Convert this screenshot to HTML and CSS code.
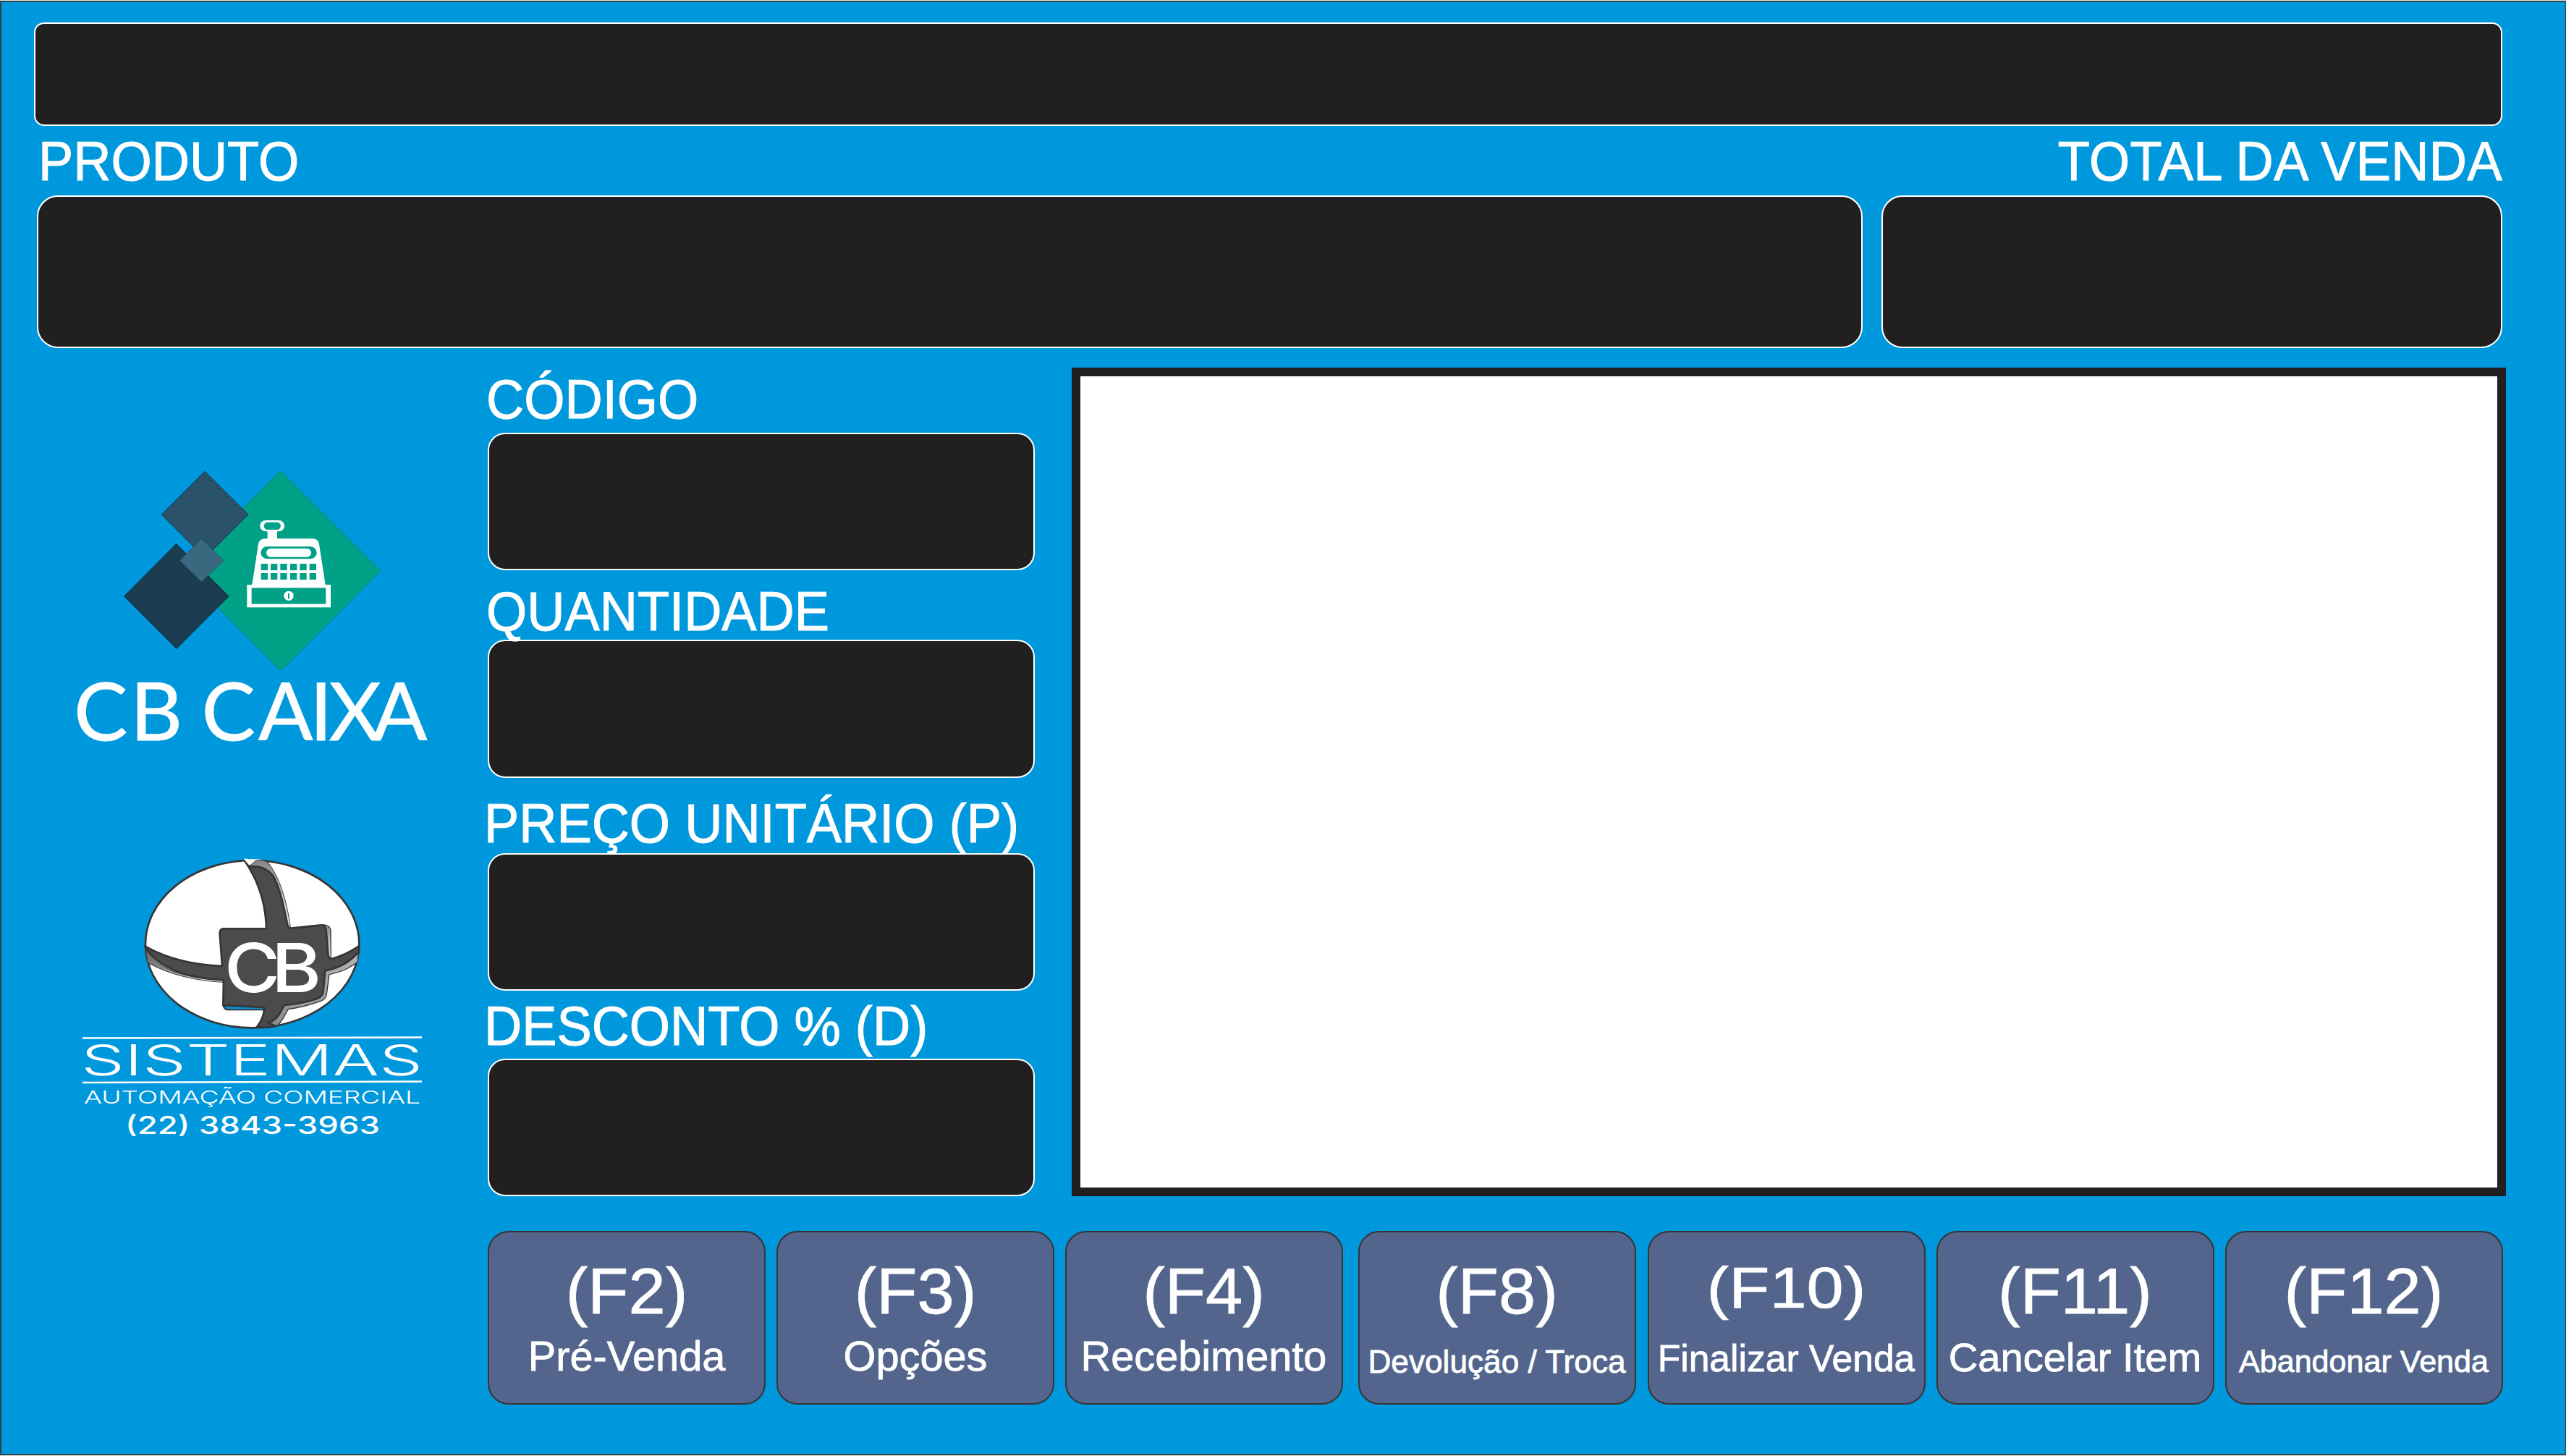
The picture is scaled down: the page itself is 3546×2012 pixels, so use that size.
FILE: index.html
```html
<!DOCTYPE html>
<html lang="pt-BR">
<head>
<meta charset="utf-8">
<title>CB Caixa</title>
<link rel="stylesheet" href="styles.css">
</head>
<body>
<div class="screen">
  <div class="display status"></div>

  <div class="headings">
    <div class="label">PRODUTO</div>
    <div class="label total-label">TOTAL DA VENDA</div>
  </div>
  <div class="top-row">
    <div class="display product"></div>
    <div class="display total"></div>
  </div>

  <main class="work">
    <aside class="brand">
      <svg class="logo-caixa" viewBox="0 0 520 420" width="520" height="420">
        <g transform="translate(60 0) scale(.33333)">
          <path d="M713 62L1128 476L715 890L300 476Z" fill="#00a186" stroke="#0b7f70" stroke-width="3"/>
          <path d="M399 64L579 243L399 423L220 243Z" fill="#2a5369" stroke="#16384a" stroke-width="3"/>
          <path d="M281 365L498 582L282 799L65 582Z" fill="#1c3c50" stroke="#0d2130" stroke-width="3"/>
          <path d="M385 343L477 434L385 522L295 434Z" fill="#39687f" stroke="#1f4456" stroke-width="2"/>
          <g fill="#fff">
            <rect x="628" y="267" width="101" height="46" rx="23"/>
            <rect x="659" y="305" width="40" height="46"/>
            <path d="M594 540L621 366Q625 344 650 343H846Q868 344 873 366L900 540Z"/>
            <rect x="574" y="534" width="347" height="94"/>
          </g>
          <g fill="#00a186">
            <rect x="644" y="275" width="70" height="31" rx="15.500"/>
            <rect x="631" y="376" width="232" height="51" rx="25.500"/>
            <path d="M632 447h28v27h-28zM672 447h28v27h-28zM712 447h28v27h-28zM753 447h28v27h-28zM793 447h28v27h-28zM833 447h28v27h-28zM632 486h28v27h-28zM672 486h28v27h-28zM712 486h28v27h-28zM753 486h28v27h-28zM793 486h28v27h-28zM833 486h28v27h-28z"/>
            <rect x="593" y="547" width="308" height="67"/>
          </g>
          <rect x="654" y="384" width="186" height="35" rx="17.500" fill="#fff"/>
          <circle cx="747" cy="580" r="20" fill="#fff"/>
          <rect x="744" y="570" width="6" height="22" fill="#00a186"/>
        </g>
        <text class="caixa" x="12 90 150 188.500 267 338 364.500 425" y="393">CB CAIXA</text>
      </svg>

      <svg class="logo-sistemas" viewBox="0 0 520 420" width="520" height="420">
        <defs>
          <linearGradient id="steel" x1="0" y1="0" x2="0" y2="1">
            <stop offset="0" stop-color="#858585"/>
            <stop offset="1" stop-color="#f2f2f2"/>
          </linearGradient>
          <linearGradient id="steelSide" x1="0" y1="0" x2="1" y2="0">
            <stop offset="0" stop-color="#6c6c6c"/>
            <stop offset="1" stop-color="#f5f5f5"/>
          </linearGradient>
          <linearGradient id="steelLow" x1="0" y1="1" x2="1" y2="0">
            <stop offset="0" stop-color="#8a8a8a"/>
            <stop offset="1" stop-color="#b4b4b4"/>
          </linearGradient>
        </defs>
        <g transform="translate(90 0) scale(.33333)" stroke-linejoin="round">
          <ellipse cx="506" cy="404" rx="443" ry="347" fill="#fff" stroke="#373435" stroke-width="8"/>
          <path d="M476 52H542L520 62L495 80Z" fill="#fff"/>
          <path d="M495 80L520 58Q548 50 572 66C620 130 648 220 664 334L650 326C630 230 610 90 520 80Z" fill="url(#steel)" stroke="#373435" stroke-width="3"/>
          <path d="M800 323Q828 326 831 346L832 463L818 456Z" fill="url(#steel)" stroke="#373435" stroke-width="4"/>
          <path d="M64 424L70 480C160 530 270 556 384 562V552C240 545 120 520 64 424Z" fill="url(#steelSide)" stroke="#373435" stroke-width="3"/>
          <path d="M946 438L943 478C900 510 870 520 825 530L814 612Q812 632 790 640C740 658 705 668 655 673C640 700 625 735 602 745L568 728C600 720 620 690 638 657L780 618L806 512C860 505 905 480 946 438Z" fill="url(#steelLow)" stroke="#373435" stroke-width="4"/>
          <path d="M386 655Q388 677 406 676H554V664Z" fill="#0098dd" stroke="#373435" stroke-width="6"/>
          <path d="M474 58C530 140 562 230 564 340H388Q370 341 371 360L381 495C250 490 145 460 60 412C115 505 230 545 387 553L385 658L555 666C556 695 545 722 525 747Q565 752 604 744L568 728C605 725 622 690 638 657C700 652 745 640 775 630Q798 622 800 600L808 514C870 503 915 475 948 434V412Q895 448 835 465Q823 465 821 450L812 345Q808 325 792 325L668 338Q657 340 653 328C635 240 617 160 590 118Q555 75 495 83Z" fill="#4b4b4d" stroke="#373435" stroke-width="8"/>
          <path d="M470 50H488L494 78Z" fill="#fff"/>
          <text class="monogram" transform="translate(390 602) scale(1.12 1)" x="0 174" y="0">CB</text>
        </g>
        <path d="M24 264.500L493 263.500M24 326L493 324.500" stroke="#fff" stroke-width="2.500"/>
        <text class="sistemas" x="22" y="316" textLength="472" lengthAdjust="spacingAndGlyphs">SISTEMAS</text>
        <text class="automacao" x="26" y="355" textLength="465" lengthAdjust="spacingAndGlyphs">AUTOMAÇÃO COMERCIAL</text>
        <text class="phone" x="83" y="397" textLength="352" lengthAdjust="spacingAndGlyphs">(22) 3843-3963</text>
      </svg>
    </aside>

    <section class="fields">
      <div class="field codigo"><div class="label">CÓDIGO</div><div class="display"></div></div>
      <div class="field quantidade"><div class="label">QUANTIDADE</div><div class="display"></div></div>
      <div class="field preco"><div class="label">PREÇO UNITÁRIO (P)</div><div class="display"></div></div>
      <div class="field desconto"><div class="label">DESCONTO % (D)</div><div class="display"></div></div>
    </section>

    <section class="receipt"></section>
  </main>

  <nav class="actions">
    <button class="action"><span class="key">(F2)</span><span class="name">Pré-Venda</span></button>
    <button class="action"><span class="key">(F3)</span><span class="name">Opções</span></button>
    <button class="action"><span class="key">(F4)</span><span class="name">Recebimento</span></button>
    <button class="action devolucao"><span class="key">(F8)</span><span class="name">Devolução / Troca</span></button>
    <button class="action finalizar"><span class="key">(F10)</span><span class="name">Finalizar Venda</span></button>
    <button class="action cancelar"><span class="key">(F11)</span><span class="name">Cancelar Item</span></button>
    <button class="action abandonar"><span class="key">(F12)</span><span class="name">Abandonar Venda</span></button>
  </nav>
</div>
</body>
</html>
```
FILE: styles.css
```css
* { box-sizing: border-box; }

body {
  margin: 0;
  background: #e4e8e6;
  font-family: "Liberation Sans", Arial, sans-serif;
  color: #fff;
}

.screen {
  width: 3546px;
  height: 2010px;
  margin: 1px 0;
  padding: 28px 0 0 45px;
  border: 2px solid #33424a;
  border-right-width: 1px;
  background: #0098dd;
  display: flex;
  flex-direction: column;
  overflow: hidden;
}

.display {
  background: #211f20;
  border: 2.5px solid #fff;
  border-radius: 24px;
}

.status {
  width: 3411px;
  height: 143px;
  border-radius: 14px;
  flex: none;
}

.label {
  font-size: 72.3px;
  line-height: 72.5px;
  white-space: nowrap;
  transform: translateY(1px) scaleY(1.042);
  transform-origin: 0 84.65%;
  -webkit-text-stroke: 1px #fff;
}

.headings {
  display: flex;
  justify-content: space-between;
  width: 3405px;
  margin: 12.6px 0 11.4px 6px;
}
.total-label { letter-spacing: .35px; }

.top-row {
  display: flex;
  gap: 26px;
  margin-left: 4px;
  height: 211px;
}

.product { width: 2523px; border-radius: 29px; }
.total { width: 858px; border-radius: 29px; }

.work {
  display: flex;
  height: 1145.5px;
  margin-top: 27px;
}

.brand {
  width: 520px;
  margin-left: 43px;
  padding-top: 121.5px;
  display: flex;
  flex-direction: column;
  gap: 120px;
}
.brand svg { display: block; flex: none; }

.caixa { font-family: Lato, sans-serif; font-size: 111.5px; fill: #fff; stroke: #fff; stroke-width: .8px; }
.monogram { font-family: Inter, sans-serif; font-size: 282px; font-weight: 500; fill: #fff; stroke: none; }
.sistemas { font-family: Inter, sans-serif; font-size: 59px; font-weight: 300; fill: #fff; }
.automacao { font-family: Inter, sans-serif; font-size: 24.5px; font-weight: 300; fill: #fff; }
.phone { font-family: Inter, sans-serif; font-size: 33.5px; font-weight: 500; fill: #fff; }

.fields {
  width: 755.5px;
  margin-left: 64px;
}
.field .display { height: 190.5px; }
.field .label { margin-left: -2px; }

.codigo { padding-top: 8px; }
.codigo .display { margin-top: 9px; }
.quantidade { padding-top: 21px; }
.quantidade .display { margin-top: 2.5px; }
.preco { padding-top: 27px; }
.preco .display { margin-top: 4.5px; }
.desconto { padding-top: 13px; }
.desconto .display { margin-top: 8px; }
.preco .label, .desconto .label { margin-left: -5px; }

.receipt {
  width: 1982px;
  height: 1145px;
  margin-left: 51.5px;
  border: 12px solid #211f20;
  background: #fff;
}

.actions {
  display: grid;
  grid-template-columns: 399px 398.5px 405px 400px 399px 399px 384px;
  margin: 47px 0 0 627px;
}

.action {
  width: 384px;
  height: 240.5px;
  padding: 34.5px 0 0;
  border: 2.5px solid #373435;
  border-radius: 29px;
  background: #53658d;
  color: #fff;
  font-family: inherit;
  display: flex;
  flex-direction: column;
  align-items: center;
  white-space: nowrap;
}

.key, .name {
  line-height: 1;
  transform-origin: 50% 84.65%;
  -webkit-text-stroke: .8px #fff;
}
.key { font-size: 92px; transform: scaleY(.975); }
.name { font-size: 57.7px; margin-top: 17px; }

.finalizar .key { transform: translateY(-7.5px) scaleY(.857); }
.devolucao .name { font-size: 44.2px; margin-top: 31px; }
.finalizar .name { font-size: 51.6px; margin-top: 22.3px; }
.cancelar .name { font-size: 56.2px; margin-top: 18.8px; }
.abandonar .name { font-size: 43.1px; margin-top: 30.5px; }
```
